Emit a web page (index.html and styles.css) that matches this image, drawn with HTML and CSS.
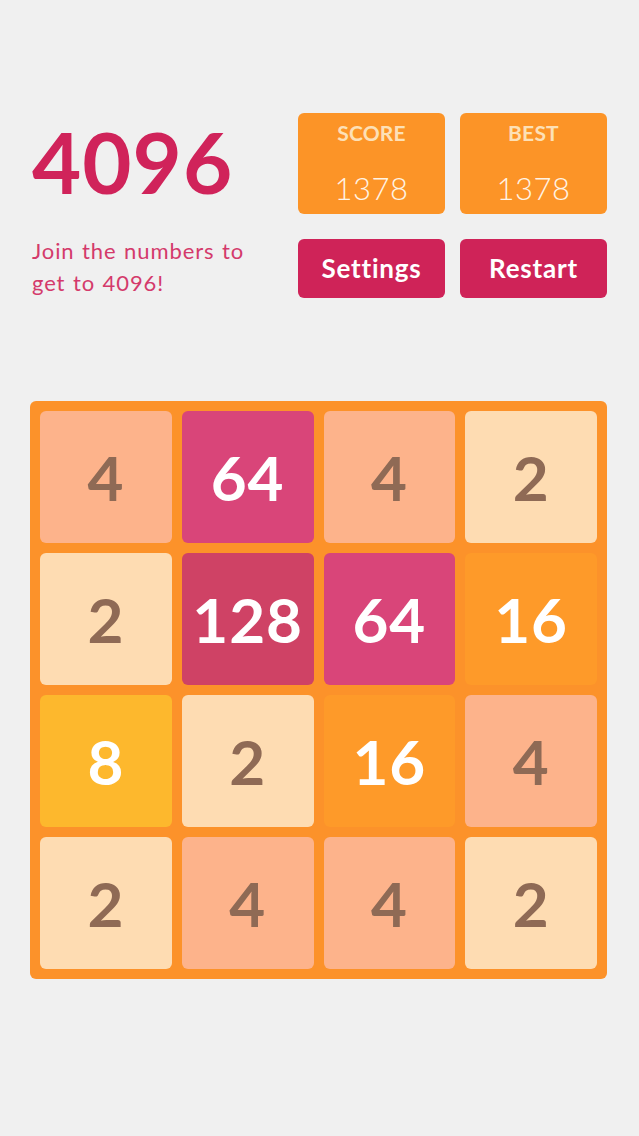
FILE: index.html
```html
<!DOCTYPE html>
<html>
<head>
<meta charset="utf-8">
<link rel="stylesheet" href="styles.css">
</head>
<body>
<div class="page">
  <header class="header">
    <div class="intro">
      <h1 class="title">4096</h1>
      <p class="tagline">Join the numbers to<br>get to 4096!</p>
    </div>
    <div class="controls">
      <div class="scorebox"><span class="label">SCORE</span><span class="value">1378</span></div>
      <div class="scorebox"><span class="label">BEST</span><span class="value">1378</span></div>
      <div class="btn">Settings</div>
      <div class="btn">Restart</div>
    </div>
  </header>
  <div class="board">
    <div class="tile t4">4</div>
    <div class="tile t64">64</div>
    <div class="tile t4">4</div>
    <div class="tile t2">2</div>
    <div class="tile t2">2</div>
    <div class="tile t128">128</div>
    <div class="tile t64">64</div>
    <div class="tile t16">16</div>
    <div class="tile t8">8</div>
    <div class="tile t2">2</div>
    <div class="tile t16">16</div>
    <div class="tile t4">4</div>
    <div class="tile t2">2</div>
    <div class="tile t4">4</div>
    <div class="tile t4">4</div>
    <div class="tile t2">2</div>
  </div>
</div>
</body>
</html>
```
FILE: styles.css
```css
html, body {
  margin: 0;
  padding: 0;
  background: #f0f0f0;
}
body {
  font-family: Lato, "Noto Sans", sans-serif;
  width: 639px;
  height: 1136px;
  overflow: hidden;
}
.page {
  padding: 113px 32px 0 30px;
}
.header {
  display: flex;
  justify-content: space-between;
}
.intro {
  padding-left: 2px;
}
.title {
  margin: 0;
  font-size: 85px;
  line-height: 1;
  font-weight: 700;
  color: #d0235a;
  padding-top: 6px;
  letter-spacing: 1px;
}
.tagline {
  margin: 31px 0 0;
  font-size: 22px;
  line-height: 32px;
  color: #d43a6b;
  font-weight: 400;
  letter-spacing: 0.9px;
  word-spacing: 1px;
}
.controls {
  display: grid;
  grid-template-columns: 147px 147px;
  grid-template-rows: 101px 59px;
  column-gap: 15px;
  row-gap: 25px;
}
.scorebox {
  background: #fc9427;
  border-radius: 6px;
  display: flex;
  flex-direction: column;
  align-items: center;
}
.label {
  color: #fde0b6;
  font-size: 21px;
  font-weight: 700;
  margin-top: 8px;
  line-height: 24px;
  letter-spacing: 0.2px;
}
.value {
  color: #fff3e4;
  font-size: 31px;
  font-weight: 300;
  margin-top: 25px;
  line-height: 36px;
  letter-spacing: 0.5px;
}
.btn {
  background: #cf2358;
  border-radius: 6px;
  color: #ffffff;
  font-size: 26px;
  font-weight: 700;
  letter-spacing: 0.8px;
  display: flex;
  align-items: center;
  justify-content: center;
  padding-bottom: 2px;
  box-sizing: border-box;
}
.board {
  margin-top: 102px;
  width: 557px;
  padding: 10px;
  background: #fc922a;
  border-radius: 6px;
  display: grid;
  grid-template-columns: repeat(4, 1fr);
  grid-auto-rows: 132px;
  gap: 10px;
}
.tile {
  border-radius: 6px;
  display: flex;
  align-items: center;
  justify-content: center;
  font-size: 62px;
  font-weight: 700;
  color: #8f6a55;
  letter-spacing: 1px;
}
.t2 { background: #fedcb2; }
.t4 { background: #fdb38b; }
.t8 { background: #fdb82d; color: #fff; }
.t16 { background: #fe9a29; color: #fff; }
.t64 { background: #d94579; color: #fff; }
.t128 { background: #cf4265; color: #fff; }
```
